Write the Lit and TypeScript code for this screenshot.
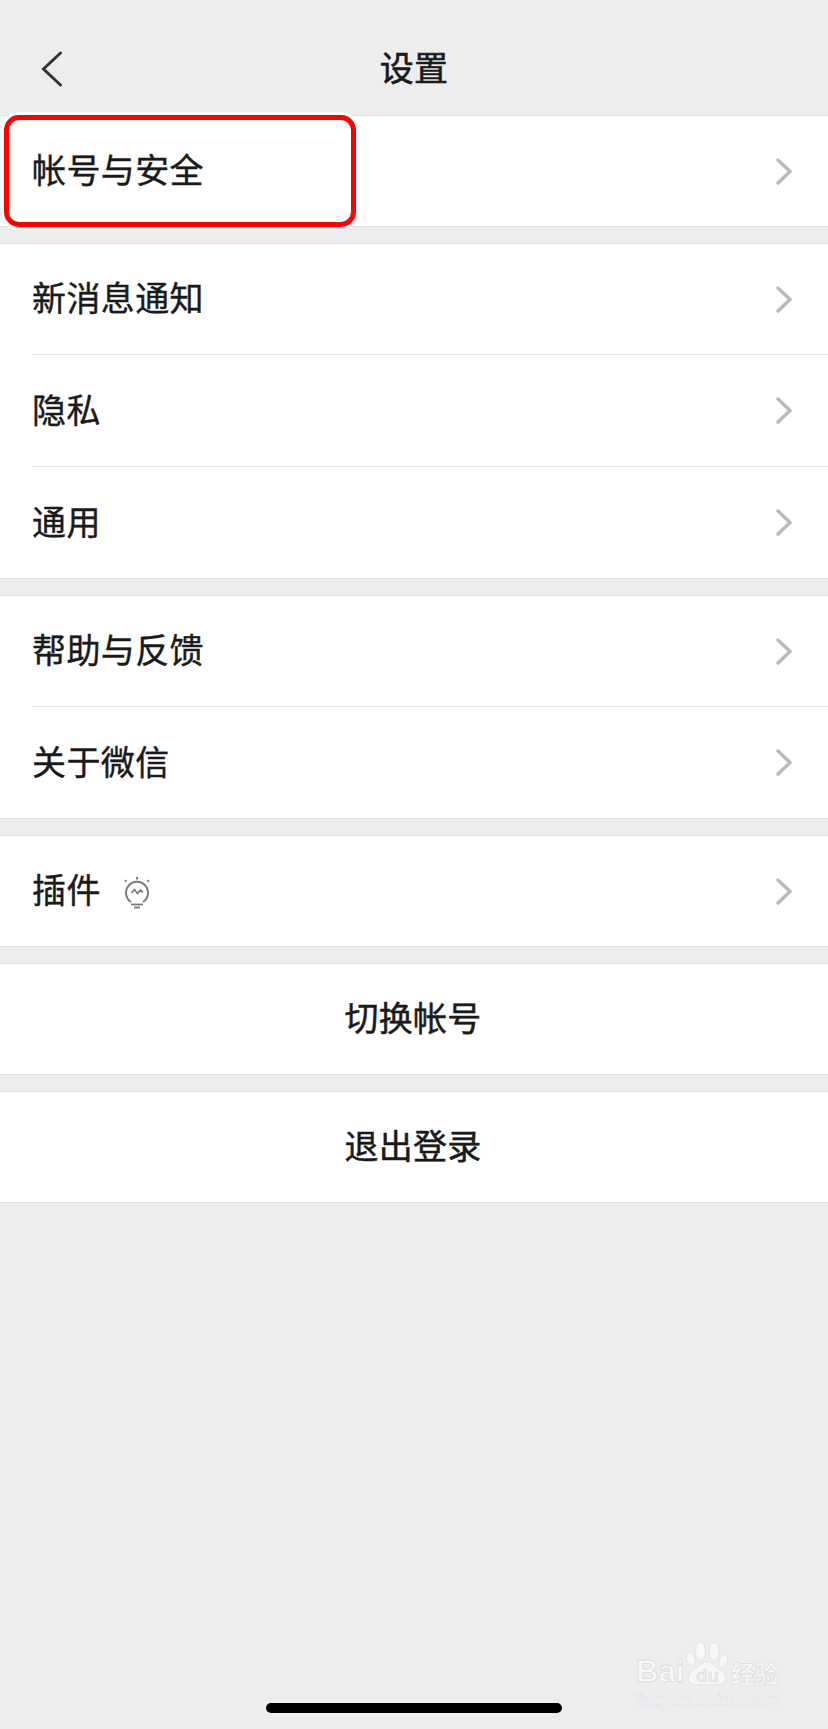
import { LitElement, html, css, svg } from "lit";
import { customElement } from "lit/decorators.js";

const chevron = html`<svg class="chev" width="16" height="27" viewBox="0 0 16 27"><path d="M2 2 L14 13.5 L2 25" fill="none" stroke="#b9b9b9" stroke-width="3.4" stroke-linecap="round" stroke-linejoin="miter"/></svg>`;

const bulb = html`<svg class="bulb" width="28" height="32" viewBox="0 0 28 32" fill="none" stroke="#7a7a7a">
  <path d="M8 25 A11 11 0 1 1 20 25" stroke-width="2"/>
  <path d="M8.5 16 L11.5 12.5 L14.5 16.5 L17.5 13 L20 15.5" stroke-width="1.7"/>
  <path d="M8 27.5 H20" stroke-width="1.8"/><path d="M11 30.5 H17" stroke-width="1.8"/>
  <path d="M14 0 V2.5" stroke-width="2"/><path d="M2 3.2 L3.6 4.6" stroke-width="2"/><path d="M26 3.2 L24.4 4.6" stroke-width="2"/>
</svg>`;

const paw = svg`<g fill="#f8f8f8" stroke="#e0e0e0" stroke-width="0.8">
  <ellipse cx="4.8" cy="18" rx="4.2" ry="6.6" transform="rotate(-15 4.8 18)"/>
  <ellipse cx="14.5" cy="10" rx="5" ry="9"/>
  <ellipse cx="28" cy="10.5" rx="5" ry="9"/>
  <ellipse cx="37.2" cy="20" rx="4.2" ry="6.6" transform="rotate(15 37.2 20)"/>
  <path d="M21 21 C27 21 29 26 34 29 C41 33 42 43 33 43.5 C27 44 16 44 9 43.5 C0 43 1 33 8 29 C13 26 15 21 21 21 Z"/>
</g>`;

@customElement("app-root")
export class AppRoot extends LitElement {
  static styles = css`
    :host {
      display: block;
      width: 828px;
      height: 1729px;
      overflow: hidden;
      background: #ededed;
      font-family: "Noto Sans CJK SC", "Noto Sans", sans-serif;
      color: #1a1a1a;
    }
    .page {
      position: relative;
      height: 1729px;
      display: flex;
      flex-direction: column;
      box-sizing: border-box;
    }
    .header {
      height: 115px;
      flex: none;
      display: grid;
      grid-template-columns: 1fr auto 1fr;
      align-items: center;
      padding-top: 22px;
      box-sizing: border-box;
    }
    .back {
      padding-left: 41px;
      display: flex;
    }
    .title {
      font-size: 34px;
      line-height: 48px;
      letter-spacing: 0.3px;
      padding-bottom: 4px;
      -webkit-text-stroke: 0.6px #1a1a1a;
    }
    .groups {
      display: flex;
      flex-direction: column;
      gap: 16px;
    }
    .group {
      background: #fff;
      border-top: 1px solid #e2e2e2;
      border-bottom: 1px solid #e2e2e2;
    }
    .row {
      height: 112px;
      box-sizing: border-box;
      margin-left: 32px;
      padding-right: 36px;
      display: flex;
      align-items: center;
      font-size: 34px;
      line-height: 48px;
      border-top: 1px solid #e2e2e2;
    }
    .row:first-child {
      height: 110px;
      border-top: none;
    }
    .label {
      flex: 1;
      display: flex;
      align-items: center;
      gap: 22px;
      padding-bottom: 4px;
      letter-spacing: 0.4px;
      -webkit-text-stroke: 0.4px #1a1a1a;
    }
    .bulb {
      margin-top: 7px;
    }
    .action {
      height: 110px;
      padding-bottom: 4px;
      padding-right: 2px;
      box-sizing: border-box;
      display: flex;
      align-items: center;
      justify-content: center;
      font-size: 34px;
      line-height: 48px;
      letter-spacing: 0.3px;
      -webkit-text-stroke: 0.5px #1a1a1a;
    }
    .spacer {
      flex: 1;
    }
    .homebar {
      flex: none;
      align-self: center;
      width: 296px;
      height: 10px;
      margin-bottom: 16px;
      border-radius: 5px;
      background: #000;
    }
    .highlight {
      position: absolute;
      left: 4px;
      top: 115px;
      width: 352px;
      height: 112px;
      box-sizing: border-box;
      border: 5px solid #fe0000;
      border-radius: 15px;
      box-shadow: 0 0 0 3px #fff;
    }
    .watermark {
      position: absolute;
      left: 634px;
      top: 1638px;
      width: 150px;
      height: 76px;
      color: #f8f8f8;
      font-family: "Liberation Sans", sans-serif;
    }
    .paw {
      position: absolute;
      left: 52px;
      top: 3px;
    }
    .brand {
      position: absolute;
      left: 2px;
      top: 17px;
      font-size: 31px;
      line-height: 34px;
      font-weight: 700;
      -webkit-text-stroke: 0.8px #dadada;
    }
    .du {
      position: absolute;
      left: 62px;
      top: 27px;
      font-size: 19px;
      line-height: 22px;
      font-weight: 700;
      color: #ececec;
      -webkit-text-stroke: 0.5px #d8d8d8;
    }
    .jy {
      position: absolute;
      left: 97px;
      top: 19px;
      font-family: "Noto Sans CJK SC", sans-serif;
      font-size: 24px;
      line-height: 32px;
      font-weight: 700;
      white-space: nowrap;
      -webkit-text-stroke: 0.6px #dadada;
    }
    .url {
      position: absolute;
      left: 1px;
      top: 52px;
      font-size: 18px;
      line-height: 20px;
      white-space: nowrap;
      -webkit-text-stroke: 0.5px #dedede;
    }
  `;

  private row(label: string, extra: unknown = null) {
    return html`<div class="row">
      <div class="label"><span>${label}</span>${extra}</div>
      ${chevron}
    </div>`;
  }

  render() {
    return html`<div class="page">
      <div class="header">
        <div class="back">
          <svg width="22" height="36" viewBox="0 0 22 36"><path d="M19.5 2 L2.5 18 L19.5 34" fill="none" stroke="#333" stroke-width="3" stroke-linecap="round"/></svg>
        </div>
        <div class="title">设置</div>
        <div></div>
      </div>
      <div class="groups">
        <div class="group">${this.row("帐号与安全")}</div>
        <div class="group">${this.row("新消息通知")}${this.row("隐私")}${this.row("通用")}</div>
        <div class="group">${this.row("帮助与反馈")}${this.row("关于微信")}</div>
        <div class="group">${this.row("插件", bulb)}</div>
        <div class="group"><div class="action">切换帐号</div></div>
        <div class="group"><div class="action">退出登录</div></div>
      </div>
      <div class="spacer"></div>
      <div class="homebar"></div>
      <div class="highlight"></div>
      <div class="watermark">
        <span class="brand">Bai</span>
        <svg class="paw" width="42" height="45" viewBox="0 0 42 45">${paw}</svg>
        <span class="du">du</span>
        <span class="jy">经验</span>
        <span class="url">jingyan.baidu.com</span>
      </div>
    </div>`;
  }
}
